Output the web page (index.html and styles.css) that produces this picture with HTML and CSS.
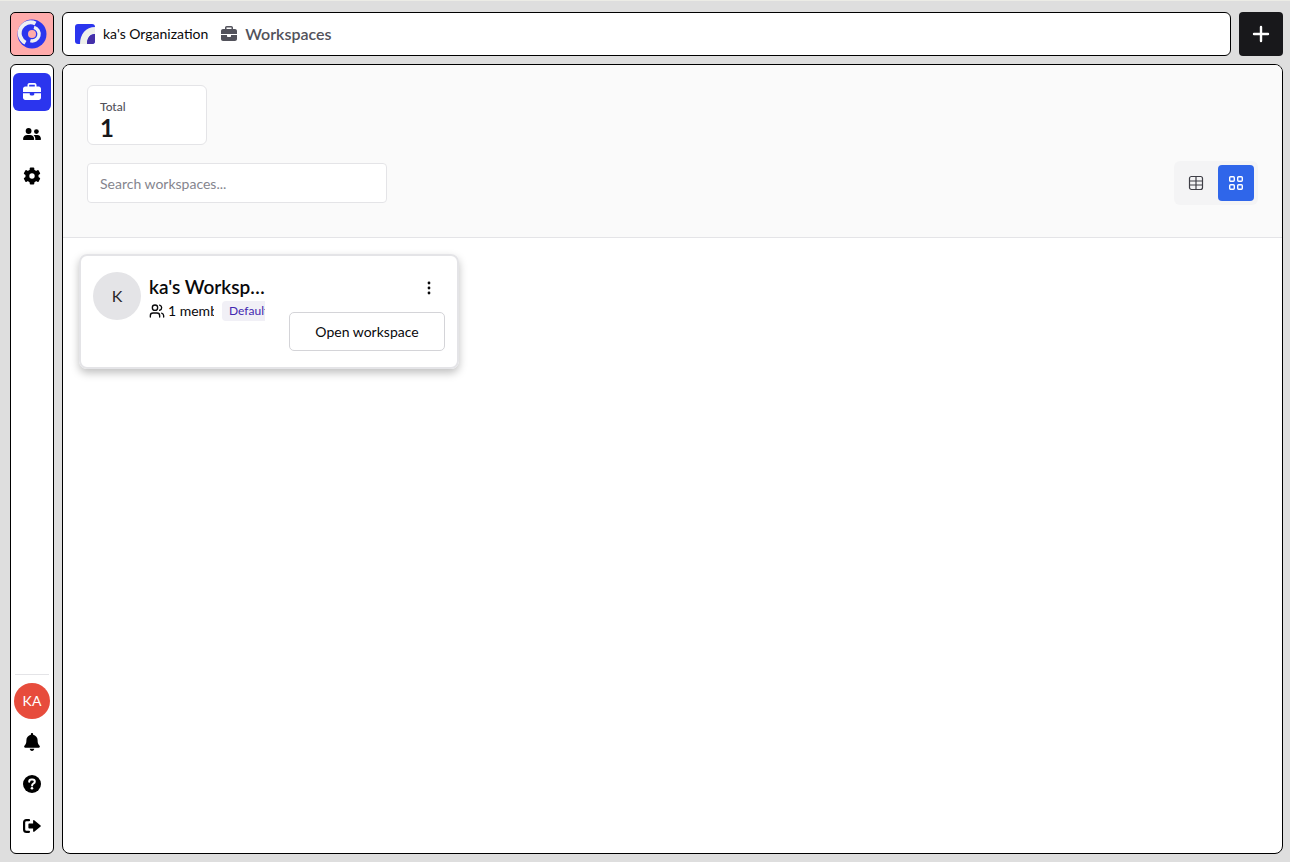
FILE: index.html
```html
<!DOCTYPE html>
<html lang="en">
<head>
    <meta charset="UTF-8">
    <meta name="viewport" content="width=device-width, initial-scale=1.0">
    <title>Workspaces</title>
    <link rel="stylesheet" href="styles.css">
</head>
<body>
    <a class="logo" href="#" aria-label="Home">
        <svg width="30" height="30" viewBox="0 0 30 30" fill="none">
            <circle cx="15" cy="15" r="14.5" fill="#2b35ee"/>
            <path d="M18.500 4.600A10.800 10.800 0 0 0 8.500 23.800" stroke="#eef0f4" stroke-width="4"/>
            <path d="M17 8.400a6.800 6.800 0 0 1-3.600 13.300" stroke="#eef0f4" stroke-width="3.400"/>
            <circle cx="15" cy="15" r="4" fill="#ffabab"/>
        </svg>
    </a>

    <header class="topbar">
        <svg width="20" height="20" viewBox="0 0 20 20">
            <rect width="20" height="20" rx="3" fill="#2b35ee"/>
            <path d="M5 20C5 10 11 3 20 3v7c-5 0-8 4-8 10z" fill="#eef0ea"/>
            <path d="M12 20c0-6 3-10 8-10v7a3 3 0 0 1-3 3z" fill="#4430a8"/>
        </svg>
        <a class="org-name" href="#">ka's Organization</a>
        <svg class="crumb-icon" width="16" height="16" viewBox="0 0 512 512" fill="currentColor">
            <path d="M184 48h144c4 0 8 4 8 8v40H176V56c0-4 4-8 8-8zM128 56v40H64c-35 0-64 29-64 64v96h512v-96c0-35-29-64-64-64h-64V56c0-31-25-56-56-56H184c-31 0-56 25-56 56zM512 288H320v32c0 18-14 32-32 32h-64c-18 0-32-14-32-32v-32H0v128c0 35 29 64 64 64h384c35 0 64-29 64-64z"/>
        </svg>
        <h1>Workspaces</h1>
    </header>

    <button class="add-button" type="button" aria-label="Add workspace">
        <svg width="18" height="18" viewBox="0 0 18 18" stroke="currentColor" stroke-width="2.4" stroke-linecap="round">
            <path d="M9 2v14M2 9h14"/>
        </svg>
    </button>

    <nav class="sidebar">
        <a class="nav-item active" href="#" aria-label="Workspaces">
            <svg width="18" height="18" viewBox="0 0 512 512" fill="currentColor">
                <path d="M184 48h144c4 0 8 4 8 8v40H176V56c0-4 4-8 8-8zM128 56v40H64c-35 0-64 29-64 64v96h512v-96c0-35-29-64-64-64h-64V56c0-31-25-56-56-56H184c-31 0-56 25-56 56zM512 288H320v32c0 18-14 32-32 32h-64c-18 0-32-14-32-32v-32H0v128c0 35 29 64 64 64h384c35 0 64-29 64-64z"/>
            </svg>
        </a>
        <a class="nav-item" href="#" aria-label="Members">
            <svg width="18" height="18" viewBox="0 0 18 18" fill="currentColor">
                <circle cx="5.6" cy="6" r="2.9"/>
                <circle cx="13.4" cy="6.6" r="2.4"/>
                <path d="M0 14.2C0 11.6 1.9 10 4.2 10H7c2.300 0 4.200 1.600 4.200 4.200 0 .5-.3.8-.8.8H.8c-.5 0-.8-.3-.8-.8z"/>
                <path d="M12.300 15c.3-1.900-.4-3.700-1.800-4.900.5-.1.900-.1 1.400-.1h2.400c2.100 0 3.700 1.600 3.700 4.200 0 .5-.3.8-.8.8z"/>
            </svg>
        </a>
        <a class="nav-item" href="#" aria-label="Settings">
            <svg width="18" height="18" viewBox="0 0 18 18">
                <g fill="currentColor">
                    <rect x="6.700" y="0.500" width="4.600" height="17" rx="1"/>
                    <rect x="6.700" y="0.500" width="4.600" height="17" rx="1" transform="rotate(60 9 9)"/>
                    <rect x="6.700" y="0.500" width="4.600" height="17" rx="1" transform="rotate(120 9 9)"/>
                    <circle cx="9" cy="9" r="6.600"/>
                </g>
                <circle cx="9" cy="9" r="2.700" fill="#fff"/>
            </svg>
        </a>

        <div class="sidebar-bottom">
            <button class="user-avatar" type="button">KA</button>
            <a class="nav-item" href="#" aria-label="Notifications">
                <svg width="18" height="18" viewBox="0 0 448 512" fill="currentColor">
                    <path d="M224 0c-18 0-32 14-32 32v19C119 66 64 131 64 208v19c0 47-17 92-48 127l-8 9c-8 9-10 23-5 34s16 19 29 19h384c13 0 24-8 29-19s3-25-5-34l-8-9c-31-35-48-80-48-127v-19c0-77-55-142-128-157V32c0-18-14-32-32-32zm45 493c12-12 19-28 19-45H160c0 17 7 33 19 45s28 19 45 19 33-7 45-19z"/>
                </svg>
            </a>
            <a class="nav-item" href="#" aria-label="Help">
                <svg width="18" height="18" viewBox="0 0 18 18" fill="none">
                    <circle cx="9" cy="9" r="9" fill="currentColor"/>
                    <path d="M6.200 6.700c0-1.300 1-2.200 2.300-2.200h1c1.300 0 2.300.9 2.300 2.200 0 1.800-2.700 1.900-2.700 3.700" stroke="#fff" stroke-width="2" stroke-linecap="round"/>
                    <circle cx="9" cy="13.200" r="1.300" fill="#fff"/>
                </svg>
            </a>
            <a class="nav-item" href="#" aria-label="Log out">
                <svg width="18" height="18" viewBox="0 0 18 18" fill="none">
                    <path d="M6 3.200H3.500C2.100 3.200 1.100 4.200 1.100 5.600v6.800c0 1.400 1 2.400 2.400 2.400H6" stroke="currentColor" stroke-width="2.200" stroke-linecap="round"/>
                    <path d="M11.200 3.300 17.600 8.500c.4.300.4.700 0 1l-6.400 5.200c-.5.4-1.100.1-1.100-.6V11.600H6.400c-.6 0-1-.4-1-1V7.400c0-.6.4-1 1-1h3.700V3.900c0-.7.6-1 1.100-.6z" fill="currentColor"/>
                </svg>
            </a>
        </div>
    </nav>

    <main class="panel">
        <section class="panel-header">
            <div class="stat">
                <span class="stat-label">Total</span>
                <strong class="stat-value">1</strong>
            </div>
            <div class="toolbar">
                <input class="search" type="text" placeholder="Search workspaces..." aria-label="Search workspaces">
                <div class="view-toggle">
                    <button type="button" aria-label="Table view">
                        <svg width="16" height="16" viewBox="0 0 16 16" fill="none" stroke="currentColor" stroke-width="1.200">
                            <rect x="1.500" y="1.500" width="13" height="13" rx="2"/>
                            <path d="M8 1.500v13M1.500 6h13M1.500 10h13"/>
                        </svg>
                    </button>
                    <button class="selected" type="button" aria-label="Grid view">
                        <svg width="16" height="16" viewBox="0 0 16 16" fill="none" stroke="currentColor" stroke-width="1.400">
                            <rect x="1.700" y="1.700" width="4.600" height="4.600" rx="1"/>
                            <rect x="9.700" y="1.700" width="4.600" height="4.600" rx="1"/>
                            <rect x="1.700" y="9.700" width="4.600" height="4.600" rx="1"/>
                            <rect x="9.700" y="9.700" width="4.600" height="4.600" rx="1"/>
                        </svg>
                    </button>
                </div>
            </div>
        </section>

        <section class="workspace-list">
            <article class="workspace-card">
                <div class="workspace-avatar">K</div>
                <div class="workspace-info">
                    <h2>ka's Workspace</h2>
                    <div class="workspace-meta">
                        <svg width="16" height="16" viewBox="0 0 24 24" fill="none" stroke="currentColor" stroke-width="2" stroke-linecap="round" stroke-linejoin="round">
                            <path d="M16 21v-2a4 4 0 0 0-4-4H6a4 4 0 0 0-4 4v2"/>
                            <circle cx="9" cy="7" r="4"/>
                            <path d="M22 21v-2a4 4 0 0 0-3-3.870M16 3.130a4 4 0 0 1 0 7.750"/>
                        </svg>
                        <span class="members">1 member</span>
                        <span class="badge">Default</span>
                    </div>
                </div>
                <div class="workspace-actions">
                    <button class="menu-button" type="button" aria-label="More options">
                        <svg width="16" height="16" viewBox="0 0 16 16" fill="currentColor">
                            <circle cx="8" cy="3" r="1.400"/>
                            <circle cx="8" cy="8" r="1.400"/>
                            <circle cx="8" cy="13" r="1.400"/>
                        </svg>
                    </button>
                    <button class="open-button" type="button">Open workspace</button>
                </div>
            </article>
        </section>
    </main>
</body>
</html>
```
FILE: styles.css
```css
* {
    box-sizing: border-box;
}
body {
    display: grid;
    grid-template-columns: 44px 1fr 44px;
    grid-template-rows: 44px 1fr;
    gap: 8px;
    min-height: 100vh;
    margin: 0;
    padding: 11px 7px 8px 10px;
    border-top: 1px solid #ecece6;
    background-color: #dedede;
    color: #09090b;
    font-family: Lato, sans-serif;
    font-size: 14px;
    line-height: 20px;
}
a {
    color: inherit;
    text-decoration: none;
}
button,
input {
    font: inherit;
    color: inherit;
}
button {
    display: flex;
    align-items: center;
    justify-content: center;
    padding: 0;
    border: none;
    background: none;
    cursor: pointer;
}
svg {
    display: block;
    flex-shrink: 0;
}
h1,
h2 {
    margin: 0;
}
.logo {
    display: flex;
    align-items: center;
    justify-content: center;
    border: 1px solid #000;
    border-radius: 5px;
    background-color: #ffabab;
}
.topbar {
    display: flex;
    align-items: center;
    padding: 0 12px;
    border: 1px solid #000;
    border-radius: 6px;
    background-color: #fff;
}
.org-name {
    margin-left: 8px;
}
.crumb-icon {
    margin: 0 8px 0 13px;
    color: #52525b;
}
.topbar h1 {
    color: #52525b;
    font-size: 16px;
    font-weight: 600;
}
.add-button {
    border-radius: 4px;
    background-color: #18181b;
    color: #fff;
}

/* Sidebar */
.sidebar {
    display: flex;
    flex-direction: column;
    align-items: center;
    gap: 4px;
    padding: 8px 2px;
    border: 1px solid #000;
    border-radius: 6px;
    background-color: #fff;
}
.nav-item {
    display: flex;
    align-items: center;
    justify-content: center;
    width: 38px;
    height: 38px;
    border-radius: 6px;
    color: #000;
}
.nav-item.active {
    background-color: #2b35ee;
    color: #fff;
}
.sidebar-bottom {
    display: flex;
    flex-direction: column;
    align-items: center;
    gap: 4px;
    margin-top: auto;
    padding-top: 8px;
    border-top: 1px solid #e4e4e7;
    width: 34px;
}
.user-avatar {
    width: 36px;
    height: 36px;
    border-radius: 50%;
    background-color: #e74c3c;
    color: #fff;
}

/* Main panel */
.panel {
    grid-column: 2 / 4;
    border: 1px solid #000;
    border-radius: 8px;
    background-color: #fff;
    overflow: hidden;
}
.panel-header {
    display: flex;
    flex-direction: column;
    gap: 16px;
    padding: 20px 24px 32px;
    border-bottom: 1px solid #e4e4e7;
    background-color: #fafafa;
}
.stat {
    display: flex;
    flex-direction: column;
    width: 120px;
    height: 60px;
    padding: 12px;
    border: 1px solid #e4e4e7;
    border-radius: 6px;
    background-color: #fff;
}
.stat-label {
    color: #52525b;
    font-size: 12px;
    font-weight: 500;
    line-height: 18px;
}
.stat-value {
    color: #18181b;
    font-size: 24px;
    line-height: 24px;
}
.toolbar {
    display: flex;
    align-items: center;
    justify-content: space-between;
}
.search {
    width: 300px;
    height: 40px;
    padding: 0 12px;
    border: 1px solid #e4e4e7;
    border-radius: 4px;
    background-color: #fff;
}
.search::placeholder {
    color: #85858e;
}
.view-toggle {
    display: flex;
    gap: 4px;
    padding: 4px;
    border-radius: 6px;
    background-color: #f4f4f5;
}
.view-toggle button {
    width: 36px;
    height: 36px;
    border-radius: 4px;
    color: #3f3f46;
}
.view-toggle .selected {
    background-color: #2f66ea;
    color: #fff;
}

/* Workspace cards */
.workspace-list {
    display: flex;
    flex-wrap: wrap;
    gap: 16px;
    padding: 16px;
}
.workspace-card {
    display: flex;
    align-items: flex-start;
    width: 380px;
    padding: 16px 12px;
    border: 2px solid #e4e4e7;
    border-radius: 8px;
    box-shadow: 0 4px 8px rgba(0, 0, 0, 0.25);
}
.workspace-avatar {
    display: flex;
    align-items: center;
    justify-content: center;
    flex-shrink: 0;
    width: 48px;
    height: 48px;
    margin-right: 8px;
    border-radius: 50%;
    background-color: #e4e4e7;
    color: #27272a;
    font-size: 16px;
}
.workspace-info {
    flex: 1;
    min-width: 0;
    margin-right: 24px;
    overflow: hidden;
}
.workspace-info h2 {
    overflow: hidden;
    font-size: 19px;
    font-weight: 600;
    line-height: 29px;
    text-overflow: ellipsis;
    white-space: nowrap;
}
.workspace-meta {
    display: flex;
    align-items: center;
    white-space: nowrap;
}
.members {
    flex-shrink: 0;
    width: 46px;
    margin: 0 8px 0 3px;
    overflow: hidden;
}
.badge {
    padding: 0 7px;
    border-radius: 4px;
    background-color: #f1f0f6;
    color: #4328b0;
    font-size: 12px;
}
.workspace-actions {
    display: flex;
    flex-direction: column;
    align-items: flex-end;
    gap: 8px;
}
.menu-button {
    width: 32px;
    height: 32px;
}
.open-button {
    width: 156px;
    height: 39px;
    border: 1px solid #d4d4d8;
    border-radius: 5px;
}
```
